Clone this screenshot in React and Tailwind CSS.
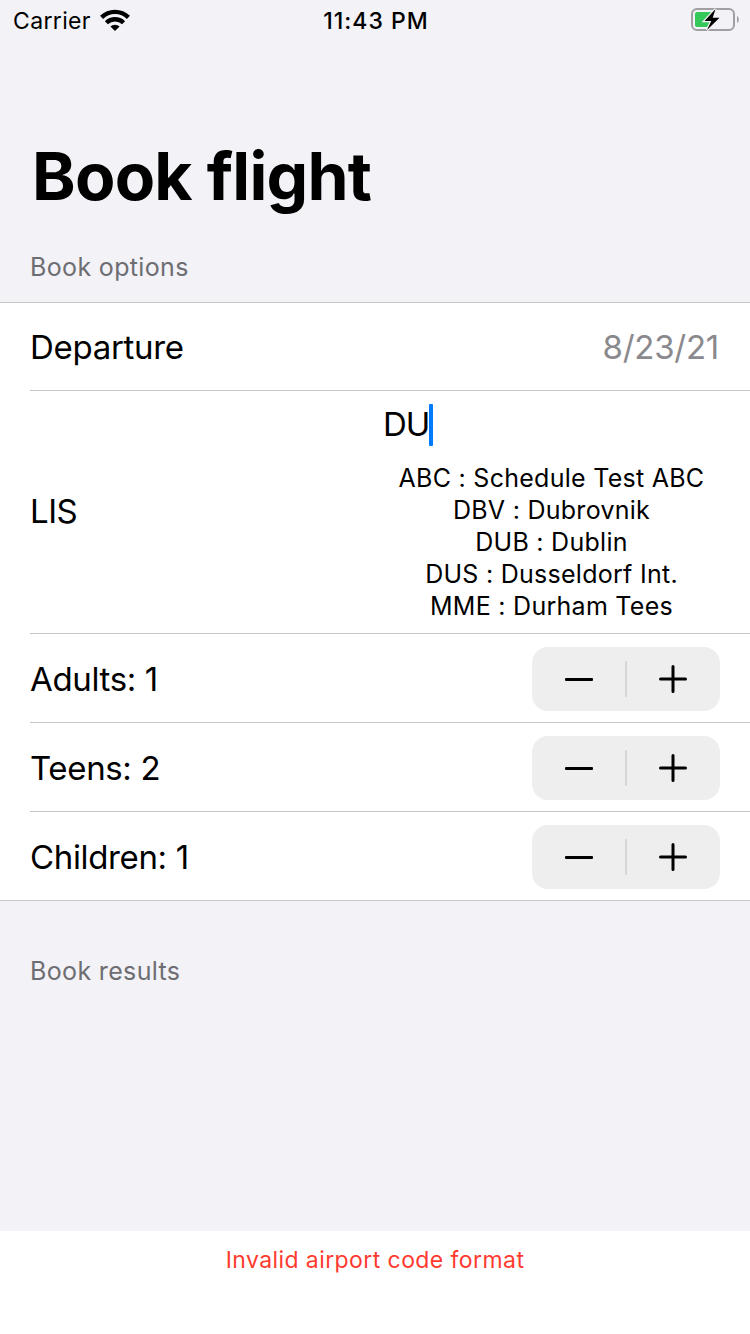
const Stepper = () => (
  <div className="mr-[30px] flex h-16 w-[188px] items-center rounded-[16px] bg-[#eeeeee]">
    <div className="flex w-[93px] pl-[33px]">
      <div className="h-[3px] w-7 rounded-[1px] bg-black" />
    </div>
    <div className="h-9 w-0.5 rounded-full bg-[#d5d5d6]" />
    <div className="flex w-[93px] pl-8">
      <svg width="28" height="28" viewBox="0 0 28 28" stroke="#000" strokeWidth="3" strokeLinecap="round">
        <path d="M1.5 14h25M14 1.5v25" />
      </svg>
    </div>
  </div>
);

const Row = ({ label, last }) => (
  <div className={last ? "flex h-[88px] items-center justify-between" : "flex h-[89px] items-center justify-between border-b border-[#c6c6c8]"}>
    <span className="pt-px text-[33px] leading-10 tracking-[-0.35px]">{label}</span>
    <div className="pt-[2px]">
      <Stepper />
    </div>
  </div>
);

const airports = [
  "ABC : Schedule Test ABC",
  "DBV : Dubrovnik",
  "DUB : Dublin",
  "DUS : Dusseldorf Int.",
  "MME : Durham Tees",
];

export default function App() {
  return (
    <div className="flex h-[1334px] w-[750px] flex-col overflow-hidden bg-[#f2f2f7] font-['Inter',sans-serif] text-black">
      <header className="grid h-10 grid-cols-3 items-center pr-[11px] pl-[13px]">
        <div className="flex items-center gap-[9px]">
          <span className="pt-[2px] text-[23px] leading-[38px] tracking-[0.35px]">Carrier</span>
          <svg width="30" height="22" viewBox="0 0 30 22" fill="none" stroke="#000" strokeWidth="4.4">
            <path d="M1.6 8.4a19 19 0 0 1 26.8 0M6.4 13.8a12.3 12.3 0 0 1 17.2 0" />
            <path d="M15 22l-4.6-4.4a6.8 6.8 0 0 1 9.2 0z" fill="#000" stroke="none" />
          </svg>
        </div>
        <span className="pt-[2px] text-center text-[23px] font-medium leading-[38px] tracking-[1px]">11:43 PM</span>
        <div className="flex justify-end">
          <svg width="48" height="24" viewBox="0 0 48 24">
            <rect x="1" y="1" width="42" height="21" rx="5" fill="none" stroke="#a0a0a2" strokeWidth="2" />
            <rect x="4" y="4" width="17" height="15" rx="2" fill="#34c759" />
            <path d="M46 8c2.5 1 2.5 6 0 7z" fill="#a0a0a2" />
            <path d="M24.5 1L13.5 13h6.8l-4.3 9L28.5 9.7h-6.8z" fill="#000" stroke="#f2f2f7" strokeWidth="2.5" paintOrder="stroke" />
          </svg>
        </div>
      </header>
      <h1 className="mt-24 pl-8 text-[66px] font-bold leading-20 tracking-[-0.75px]">Book flight</h1>
      <h2 className="mt-[35px] pl-[30px] text-[25px] leading-8 tracking-[0.35px] text-[#6d6d72]">Book options</h2>
      <main className="mt-[19px] h-[599px] border-y border-[#c6c6c8] bg-white pl-[30px]">
        <div className="flex h-[88px] items-center justify-between border-b border-[#c6c6c8] pt-[2px] pr-[31px] text-[33px] tracking-[-0.3px]">
          <span>Departure</span>
          <span className="tracking-[-0.25px] text-[#8a8a8e]">8/23/21</span>
        </div>
        <div className="flex h-[243px] items-center border-b border-[#c6c6c8]">
          <span className="w-[353px] text-[33px] tracking-[-0.5px]">LIS</span>
          <div className="flex h-full w-[337px] flex-col pt-[13px]">
            <div className="flex h-[42px] items-center text-[33px] tracking-[-1.1px]">
              <span>DU</span>
              <i className="h-[42px] w-1 rounded-[1px] bg-[#007aff]" />
            </div>
            <ul className="mt-4 text-center text-[25px] leading-8 tracking-[0.27px]">
              {airports.map((a) => <li key={a}>{a}</li>)}
            </ul>
          </div>
        </div>
        <Row label="Adults: 1" />
        <Row label="Teens: 2" />
        <Row label="Children: 1" last />
      </main>
      <h2 className="mt-[54px] pl-[30px] text-[25px] leading-8 tracking-[0.35px] text-[#6d6d72]">Book results</h2>
      <footer className="mt-auto h-[103px] bg-white pt-[13px] text-center text-[23px] leading-8 tracking-[0.42px] text-[#ff3b30]">Invalid airport code format</footer>
    </div>
  );
}
